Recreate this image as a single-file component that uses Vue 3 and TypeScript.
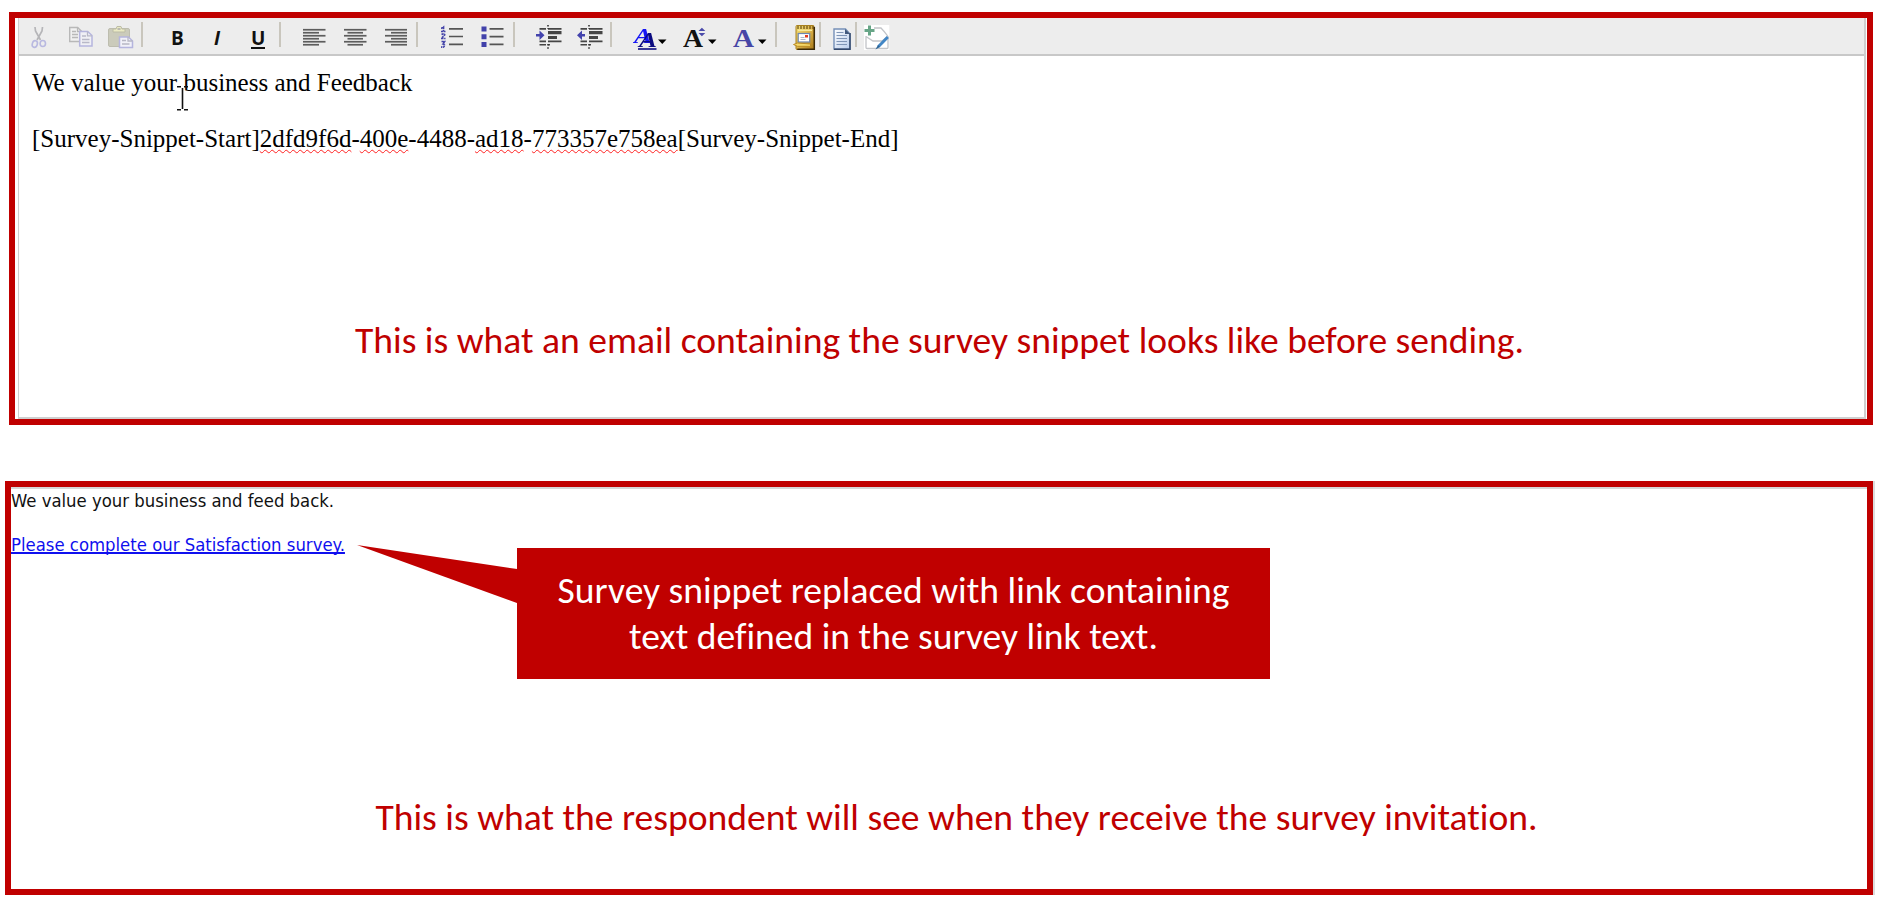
<script setup lang="ts">
interface Run {
  text: string
  flagged?: boolean
}

const greeting = 'We value your business and Feedback'

const snippet: Run[] = [
  { text: '[Survey-Snippet-Start]' },
  { text: '2dfd9f6d', flagged: true },
  { text: '-' },
  { text: '400e', flagged: true },
  { text: '-4488-' },
  { text: 'ad18', flagged: true },
  { text: '-' },
  { text: '773357e758ea', flagged: true },
  { text: '[Survey-Snippet-End]' },
]

const alignRows = [11, 14, 17, 20, 23, 26]
</script>

<template>
  <main class="page">
    <section class="panel editor">
      <div class="frame">
        <div class="toolbar">
          <!-- cut -->
          <svg class="icon" width="20" height="36" viewBox="0 0 20 36" fill="none">
            <path d="M5 9l.5 4 5 9M12.500 9l-.5 4-5 9" stroke="#b5b5b8" stroke-width="1.700" />
            <ellipse cx="4.800" cy="26" rx="2.500" ry="3.400" stroke="#b9b9e0" stroke-width="1.600" transform="rotate(18 4.800 26)" />
            <ellipse cx="12.800" cy="25.500" rx="2.700" ry="3" stroke="#b9b9e0" stroke-width="1.600" />
          </svg>
          <!-- copy -->
          <svg class="icon" width="28" height="36" viewBox="0 0 28 36" fill="none">
            <path d="M2.700 9.500h8l4 4v10h-12z" fill="#f1f1f1" stroke="#b8b8b8" stroke-width="1.400" />
            <path d="M10.500 9.500v4h4M5 13.500h4M5 16.500h6M5 19.500h6" stroke="#b8b8b8" stroke-width="1.300" />
            <path d="M12.700 13.500h8l4.300 4v10.500h-12.300z" fill="#f0f0f5" stroke="#b5b5de" stroke-width="1.500" />
            <path d="M20.500 13.500v4.300h4.500M15 18h4M15 21.500h7.500M15 24.500h7.500" stroke="#b8b8c8" stroke-width="1.300" />
          </svg>
          <!-- paste -->
          <svg class="icon" width="30" height="36" viewBox="0 0 30 36" fill="none">
            <rect x="2.500" y="10.500" width="21" height="18" rx="1.500" fill="#cbcbbb" stroke="#bdbdaf" />
            <path d="M7 14v-3h3l1-2.500h4l1 2.500h3v3z" fill="#eaeac4" stroke="#bcbca6" />
            <path d="M11.500 11h3" stroke="#aaa" stroke-width="1.500" />
            <path d="M13.500 19h9l4 4v6.500h-13z" fill="#f1f1f8" stroke="#b5b5de" stroke-width="1.500" />
            <path d="M22 19v4h4.500M16 22.500h4M16 26h7.500" stroke="#b7b7c4" stroke-width="1.300" />
          </svg>
          <i class="sep"></i>
          <b class="letter">B</b>
          <b class="letter slanted">I</b>
          <b class="letter lined">U</b>
          <i class="sep"></i>
          <!-- align left / centre / right -->
          <svg class="icon" width="23" height="36" viewBox="0 0 23 36" fill="#5d5d5d">
            <rect v-for="(y, i) in alignRows" :key="y" x="0" :y="y - 0.100" :width="i % 2 ? 16 : 22.500" height="1.700" />
          </svg>
          <svg class="icon" width="23" height="36" viewBox="0 0 23 36" fill="#5d5d5d">
            <rect v-for="(y, i) in alignRows" :key="y" :x="i % 2 ? 3.500 : 0" :y="y - 0.100" :width="i % 2 ? 15.500 : 22.500" height="1.700" />
          </svg>
          <svg class="icon" width="23" height="36" viewBox="0 0 23 36" fill="#5d5d5d">
            <rect v-for="(y, i) in alignRows" :key="y" :x="i % 2 ? 6 : 0" :y="y - 0.100" :width="i % 2 ? 16 : 22" height="1.700" />
          </svg>
          <i class="sep"></i>
          <!-- numbered list -->
          <svg class="icon" width="23" height="36" viewBox="0 0 23 36" fill="none">
            <path d="M8 10.900h14M8 18.500h14M8 26.400h14" stroke="#555" stroke-width="1.700" />
            <path d="M0 10.500l2.500-1.500v4.500M0 13.500h4.500M.5 16.500q2.500-1.500 3.200.3l-3.200 3.700h4M.5 23.500h3l-1.500 2.300q2.500.4 1 2.600q-1 1.300-3 .3" stroke="#4343a8" stroke-width="1.700" stroke-dasharray="2.200 .6" />
          </svg>
          <!-- bulleted list -->
          <svg class="icon" width="24" height="36" viewBox="0 0 24 36">
            <path d="M.5 8.500h5v5h-5zM.5 16.200h5v5h-5zM.5 24h5v5h-5z" fill="#4141aa" />
            <path d="M8.500 10h14v1.700h-14zM8.500 17.700h14v1.700h-14zM8.500 25.500h14v1.700h-14z" fill="#555" />
          </svg>
          <i class="sep"></i>
          <!-- indent -->
          <svg class="icon" width="27" height="36" viewBox="0 0 27 36">
            <path d="M3.500 10h6.500v1.700h-6.500zM12 10h13.500v1.700h-13.500zM12 13h13.500v3.300h-13.500zM12 18h9v3h-9zM3.500 22.500h6.500v1.700h-6.500zM12 22.500h13.500v1.700h-13.500zM3.500 26h6.500v1.600h-6.500zM12 26h2v1.600h-2z" fill="#454545" />
            <path d="M12 7v4M12 26v5" stroke="#333" stroke-width="1.600" stroke-dasharray="1.600 1.600" />
            <path d="M0 16h3.500v-3.500l5 4.700-5 4.700v-3.500h-3.500z" fill="#4343ad" />
          </svg>
          <!-- outdent -->
          <svg class="icon" width="27" height="36" viewBox="0 0 27 36">
            <path d="M3.500 10h6.500v1.700h-6.500zM12 10h13.500v1.700h-13.500zM12 13h13.500v3.300h-13.500zM12 18h9v3h-9zM3.500 22.500h6.500v1.700h-6.500zM12 22.500h13.500v1.700h-13.500zM3.500 26h6.500v1.600h-6.500zM12 26h2v1.600h-2z" fill="#454545" />
            <path d="M12 7v4M12 26v5" stroke="#333" stroke-width="1.600" stroke-dasharray="1.600 1.600" />
            <path d="M8 16h-3v-3.500l-5 4.700 5 4.700v-3.500h3z" fill="#4343ad" />
          </svg>
          <i class="sep"></i>
          <!-- font style -->
          <svg class="icon" width="34" height="36" viewBox="0 0 34 36">
            <text class="serif-a slant" x="6" y="28.500" font-size="22" textLength="18" lengthAdjust="spacingAndGlyphs" fill="#0a0a80">A</text>
            <path d="M5 31h18.500" stroke="#0a0a80" stroke-width="1.600" />
            <path d="M25 21.500h8.500l-4.250 4.500z" fill="#000" />
          </svg>
          <!-- font size -->
          <svg class="icon" width="34" height="36" viewBox="0 0 34 36">
            <text class="serif-a" x="0" y="28.500" font-size="25" textLength="20" lengthAdjust="spacingAndGlyphs" fill="#111">A</text>
            <path d="M15.500 13l3.400-3.300 3.400 3.300zM15.500 15l3.400 3.300 3.400-3.300z" fill="#4a4aaa" />
            <path d="M25 21.500h8.500l-4.250 4.500z" fill="#000" />
          </svg>
          <!-- font colour -->
          <svg class="icon" width="34" height="36" viewBox="0 0 34 36">
            <text class="serif-a" x="0" y="28.500" font-size="25" textLength="21" lengthAdjust="spacingAndGlyphs" fill="#4646a6">A</text>
            <path d="M25 21.500h8.500l-4.250 4.500z" fill="#000" />
          </svg>
          <i class="sep"></i>
          <!-- mail template book -->
          <svg class="icon" width="24" height="36" viewBox="0 0 24 36" fill="none">
            <defs>
              <linearGradient id="gold" x1="0" y1="0" x2="1" y2="1">
                <stop offset="0" stop-color="#f5e27a" />
                <stop offset=".5" stop-color="#dcb34a" />
                <stop offset="1" stop-color="#a77718" />
              </linearGradient>
            </defs>
            <rect x="4" y="7.500" width="18" height="24" rx="1" fill="url(#gold)" stroke="#a8801f" />
            <path d="M22.300 9v22.300h-17" stroke="#3c2a08" stroke-width="1.500" />
            <path d="M6 8v3M9 8v3M12 8v3M15 8v3M18 8v3M21 8v3" stroke="#5c430d" stroke-width="1.100" />
            <path d="M6 12.300h14" stroke="#f8ec9d" stroke-width="1.500" />
            <rect x="6.200" y="15.500" width="11.500" height="8.500" fill="#fff" stroke="#6d86b0" stroke-width="1.200" />
            <path d="M8.500 19.500h4M8.500 21.500h5" stroke="#aab7cc" />
            <path d="M13 17h3v2.500h-3z" fill="#e43b20" />
            <path d="M1.500 26.500l4-1.500 13 1v2.300h-13z" fill="#f6d96a" stroke="#b98a25" />
          </svg>
          <i class="sep"></i>
          <!-- document -->
          <svg class="icon" width="20" height="36" viewBox="0 0 20 36">
            <defs>
              <linearGradient id="sheet" x1="0" y1="0" x2="1" y2="1">
                <stop offset="0" stop-color="#fff" />
                <stop offset="1" stop-color="#b9cdec" />
              </linearGradient>
            </defs>
            <path d="M1 11h11.500l4.500 5v15h-16z" fill="url(#sheet)" stroke="#7590b8" stroke-width="1.400" />
            <path d="M17 15v16.200h-16" fill="none" stroke="#34496c" stroke-width="1.500" />
            <path d="M12 11v5h5z" fill="#42597d" />
            <path d="M3.500 14.500h7M3.500 17.500h10.500M3.500 20.500h10.500M3.500 23.500h10.500M3.500 26.500h10.500" stroke="#7f95b6" stroke-width="1.200" />
          </svg>
          <i class="sep"></i>
          <!-- insert survey -->
          <svg class="icon" width="26" height="36" viewBox="0 0 26 36" fill="none">
            <rect x="0" y="7" width="25.300" height="25" fill="#fff" />
            <path d="M10 10h7q3.500 3.500 7 8.500v11q0 1-1 1h-20q-1 0-1-1v-11.500M2 18.500l7 4.500h9l6-4.500" stroke="#c2c4c8" stroke-width="1.300" />
            <path d="M5.500 7.500v10M.5 12.500h10" stroke="#67a587" stroke-width="3" />
            <path d="M23.800 19l-9.300 9.500" stroke="#4286c5" stroke-width="3" />
            <path d="M14 27l-2.500 4.500 4.500-2.500z" fill="#296396" />
          </svg>
        </div>
        <div class="document">
          <p class="line">{{ greeting }}</p>
          <p class="line"><span v-for="(run, i) in snippet" :key="i" :class="{ flagged: run.flagged }">{{ run.text }}</span></p>
          <svg class="caret" width="13" height="30" viewBox="0 0 13 30" fill="none" stroke="#111" stroke-width="1.600">
            <path d="M1 4.800h4M8 4.800h4M6.500 6v21M1 27.800h4M8 27.800h4" />
          </svg>
        </div>
      </div>
      <p class="caption">This is what an email containing the survey snippet looks like before sending.</p>
    </section>

    <section class="panel received">
      <p class="mail">We value your business and feed back.</p>
      <p class="mail"><a class="link">Please complete our Satisfaction survey.</a></p>
      <svg class="pointer" width="162" height="60" viewBox="0 0 162 60">
        <path d="M0 0l162 24.300v34.500z" fill="#c00000" />
      </svg>
      <div class="callout">Survey snippet replaced with link containing<br />text defined in the survey link text.</div>
      <p class="caption">This is what the respondent will see when they receive the survey invitation.</p>
    </section>
  </main>
</template>

<style>
body {
  background: #fff;
}
</style>

<style scoped>
.page {
  box-sizing: border-box;
  width: 1880px;
  height: 901px;
  padding-top: 12px;
  overflow: hidden;
}
.panel {
  position: relative;
  box-sizing: border-box;
  border: 6px solid #c00000;
}
.editor {
  width: 1864px;
  height: 413px;
  margin-left: 9px;
  padding: 0 1px 0 3px;
}
.frame {
  box-sizing: border-box;
  height: 401px;
  border: solid #cfcfcf;
  border-width: 0 2px 2px 1px;
}
.toolbar {
  display: grid;
  grid-template-columns: 37px 39px 35px 29px 41px 39px 29px 24px 41px 41px 31px 25px 40px 32px 23px 41px 33px 23px 50px 50px 42px 17px 27px 14px 22px 9px 26px;
  box-sizing: border-box;
  height: 38px;
  padding-left: 11px;
  background: #ededed;
  border-bottom: 2px solid #c8c8c8;
}
.icon {
  display: block;
}
.sep {
  width: 2px;
  height: 25px;
  margin-top: 4px;
  background: #c9c6bd;
}
.letter {
  padding-left: 1px;
  font: 700 19px/40px "Open Sans", sans-serif;
  color: #111;
}
.slanted {
  padding-left: 3px;
  font-style: italic;
}
.lined {
  justify-self: start;
  box-sizing: border-box;
  height: 25px;
  margin-top: 6px;
  margin-left: 1px;
  padding: 0;
  line-height: 28px;
  border-bottom: 2px solid #111;
}
.serif-a {
  font-family: "Liberation Serif", serif;
  font-weight: 700;
}
.slant {
  font-style: italic;
  filter: drop-shadow(-5px -4px 0 #1414f5);
}
.document {
  position: relative;
  padding: 13px 0 0 13px;
}
.line {
  margin: 0 0 28px;
  font: 25px/28px "Liberation Serif", serif;
  color: #000;
  white-space: nowrap;
}
.flagged {
  text-decoration: underline wavy #f22 1.400px;
  text-decoration-skip-ink: none;
  text-underline-offset: 2px;
}
.caret {
  position: absolute;
  left: 157px;
  top: 26px;
}
.caption {
  position: absolute;
  right: 0;
  left: 0;
  margin: 0;
  font: 37.600px/46px Carlito, Calibri, sans-serif;
  font-variant-ligatures: none;
  color: #c00000;
  text-align: center;
  white-space: nowrap;
}
.editor .caption {
  top: 299px;
  left: -3px;
}
.received {
  width: 1868px;
  height: 414px;
  margin: 56px 0 0 5px;
  box-shadow: inset 0 2px #d6d6d6, 2px 0 #dcdcdc;
}
.mail {
  margin: 0;
  padding-top: 3px;
  font: 18.350px/22px "DejaVu Sans Condensed", "DejaVu Sans", sans-serif;
  color: #111;
}
.mail + .mail {
  padding-top: 22px;
}
.link {
  color: #1010ee;
  text-decoration: underline 1.500px;
  text-decoration-skip-ink: none;
}
.pointer {
  position: absolute;
  left: 346px;
  top: 58px;
}
.callout {
  position: absolute;
  left: 506px;
  top: 61px;
  box-sizing: border-box;
  width: 753px;
  height: 131px;
  padding-top: 20px;
  font: 37.600px/45.500px Carlito, Calibri, sans-serif;
  font-variant-ligatures: none;
  color: #fff;
  text-align: center;
  background: #c00000;
}
.received .caption {
  top: 307px;
  left: 35px;
}
</style>
